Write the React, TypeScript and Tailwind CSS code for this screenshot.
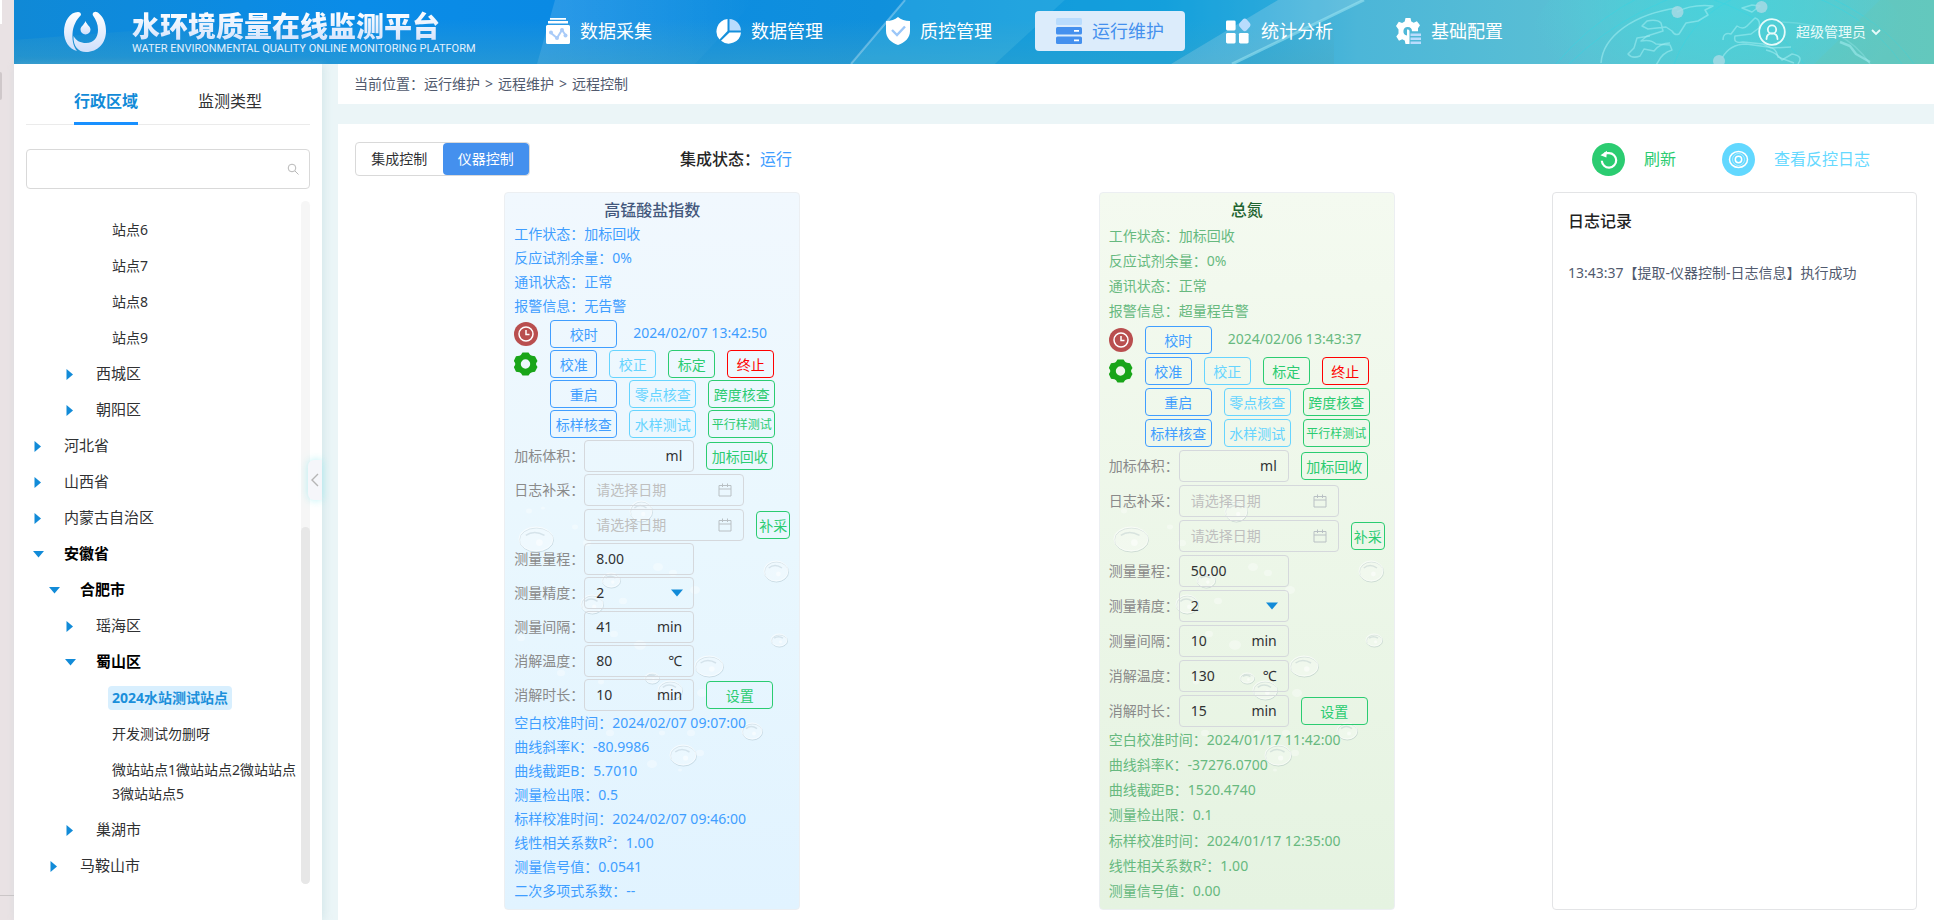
import { useState } from "react";
import type { ReactNode } from "react";

// ── Data ─────────────────────────────────────────────────────

interface Meter {
  id: string;
  name: string;
  theme: "blue" | "green";
  status: [string, string][];
  clock: string;
  range: string;
  precision: string;
  interval: string;
  temperature: string;
  duration: string;
  results: [string, string][];
}

const meters: Meter[] = [
  {
    id: "codmn",
    name: "高锰酸盐指数",
    theme: "blue",
    status: [
      ["工作状态", "加标回收"],
      ["反应试剂余量", "0%"],
      ["通讯状态", "正常"],
      ["报警信息", "无告警"],
    ],
    clock: "2024/02/07 13:42:50",
    range: "8.00",
    precision: "2",
    interval: "41",
    temperature: "80",
    duration: "10",
    results: [
      ["空白校准时间", "2024/02/07 09:07:00"],
      ["曲线斜率K", "-80.9986"],
      ["曲线截距B", "5.7010"],
      ["测量检出限", "0.5"],
      ["标样校准时间", "2024/02/07 09:46:00"],
      ["线性相关系数R²", "1.00"],
      ["测量信号值", "0.0541"],
      ["二次多项式系数", "--"],
    ],
  },
  {
    id: "tn",
    name: "总氮",
    theme: "green",
    status: [
      ["工作状态", "加标回收"],
      ["反应试剂余量", "0%"],
      ["通讯状态", "正常"],
      ["报警信息", "超量程告警"],
    ],
    clock: "2024/02/06 13:43:37",
    range: "50.00",
    precision: "2",
    interval: "10",
    temperature: "130",
    duration: "15",
    results: [
      ["空白校准时间", "2024/01/17 11:42:00"],
      ["曲线斜率K", "-37276.0700"],
      ["曲线截距B", "1520.4740"],
      ["测量检出限", "0.1"],
      ["标样校准时间", "2024/01/17 12:35:00"],
      ["线性相关系数R²", "1.00"],
      ["测量信号值", "0.00"],
    ],
  },
];

interface TreeNode {
  label: string;
  level: 1 | 2 | 3 | 4;
  state: "closed" | "open" | "leaf";
}

const tree: TreeNode[] = [
  { label: "站点6", level: 4, state: "leaf" },
  { label: "站点7", level: 4, state: "leaf" },
  { label: "站点8", level: 4, state: "leaf" },
  { label: "站点9", level: 4, state: "leaf" },
  { label: "西城区", level: 3, state: "closed" },
  { label: "朝阳区", level: 3, state: "closed" },
  { label: "河北省", level: 1, state: "closed" },
  { label: "山西省", level: 1, state: "closed" },
  { label: "内蒙古自治区", level: 1, state: "closed" },
  { label: "安徽省", level: 1, state: "open" },
  { label: "合肥市", level: 2, state: "open" },
  { label: "瑶海区", level: 3, state: "closed" },
  { label: "蜀山区", level: 3, state: "open" },
  { label: "2024水站测试站点", level: 4, state: "leaf" },
  { label: "开发测试勿删呀", level: 4, state: "leaf" },
  { label: "微站站点1微站站点2微站站点3微站站点5", level: 4, state: "leaf" },
  { label: "巢湖市", level: 3, state: "closed" },
  { label: "马鞍山市", level: 2, state: "closed" },
];

const indent = {
  1: "pl-[7px]",
  2: "pl-[23px]",
  3: "pl-[39px]",
  4: "pl-[86px]",
};

// ── Page ─────────────────────────────────────────────────────

export default function App() {
  return (
    <div className="flex min-h-screen bg-[#e9e2e4] pb-px font-['Noto_Sans','Noto_Sans_CJK_SC',sans-serif] text-sm text-[#303133]">
      <div className="flex w-3.5 shrink-0 flex-col">
        <div className="h-6 w-0.5 bg-white" />
        <div className="mt-12 h-7 w-0.5 rounded-r bg-[#cfc8ca]" />
        <div className="mt-auto mb-6 h-px bg-[#cbc6c7]" />
      </div>
      <div className="flex min-w-0 flex-1 flex-col bg-[#ebf5f7]">
        <Header />
        <div className="flex flex-1 gap-4">
          <Sidebar />
          <main className="flex min-w-0 flex-1 flex-col gap-5">
            <div className="flex h-10 items-center gap-[5px] bg-white px-4 text-[#515a6e]">
              <span>当前位置：运行维护</span>
              <span>&gt;</span>
              <span>远程维护</span>
              <span>&gt;</span>
              <span>远程控制</span>
            </div>
            <div className="flex flex-1 flex-col gap-4 bg-white px-[17px] pt-[18px] pb-2.5">
              <Toolbar />
              <div className="flex flex-1 gap-2">
                <div className="grid flex-1 grid-cols-2 justify-items-center">
                  {meters.map((m) => (
                    <MeterCard key={m.id} meter={m} />
                  ))}
                </div>
                <section className="w-[365px] shrink-0 rounded border border-[#e3e4e6] px-[15px] py-3.5">
                  <h2 className="text-base leading-7 font-medium text-[#1f1f1f]">日志记录</h2>
                  <p className="mt-[26px] leading-6 text-[#515a6e]">13:43:37【提取-仪器控制-日志信息】执行成功</p>
                </section>
              </div>
            </div>
          </main>
        </div>
      </div>
    </div>
  );
}

// ── Header ───────────────────────────────────────────────────

function Header() {
  return (
    <header className="relative flex h-16 items-center bg-gradient-to-r from-[#128bd8] via-[#1d9bda] via-55% to-[#63c9c0] text-white">
      <HeaderArt />
      <div className="relative flex w-[511px] items-center gap-[26px] pl-[50px]">
        <LogoDrop />
        <div className="pt-0.5">
          <h1 className="bg-gradient-to-b from-white to-[#d3e3fc] bg-clip-text text-[28px] leading-8 font-black text-transparent">
            水环境质量在线监测平台
          </h1>
          <p className="font-['Roboto',sans-serif] text-[11px] leading-3.5 whitespace-nowrap text-[#e3f0fd]">
            WATER ENVIRONMENTAL QUALITY ONLINE MONITORING PLATFORM
          </p>
        </div>
      </div>
      <nav className="relative flex gap-5 pb-0.5">
        <NavItem icon={<IconCollect />} label="数据采集" />
        <NavItem icon={<IconPie />} label="数据管理" />
        <NavItem icon={<IconShield />} label="质控管理" />
        <NavItem icon={<IconServer />} label="运行维护" active />
        <NavItem icon={<IconBlocks />} label="统计分析" />
        <NavItem icon={<IconGear />} label="基础配置" />
      </nav>
      <button className="relative mr-[53px] ml-auto flex items-center gap-2.5 text-[#e8fbfa]">
        <svg className="h-7 w-7" viewBox="0 0 28 28" fill="none" stroke="currentColor" strokeWidth={1.8}>
          <circle cx="14" cy="14" r="12.8" />
          <circle cx="14" cy="11.5" r="4.2" />
          <path d="M8.500 21c0-3.600 2-5.600 5.500-5.600s5.500 2 5.500 5.600" strokeLinecap="round" />
        </svg>
        <span className="flex items-center gap-[5px]">
          超级管理员
          <svg className="h-2.5 w-2.5" viewBox="0 0 10 10" fill="none" stroke="currentColor" strokeWidth={1.8}>
            <path d="M1 3l4 4 4-4" />
          </svg>
        </span>
      </button>
    </header>
  );
}

function NavItem({ icon, label, active }: { icon: ReactNode; label: string; active?: boolean }) {
  return (
    <a
      href="#"
      className={`flex h-10 w-[150px] items-center gap-2.5 rounded pl-[21px] text-lg whitespace-nowrap ${
        active ? "bg-[#dcecfb] text-[#4490ee]" : ""
      }`}
    >
      {icon}
      {label}
    </a>
  );
}

// ── Sidebar ──────────────────────────────────────────────────

function Sidebar() {
  return (
    <aside className="relative w-[308px] shrink-0 bg-white px-3 pb-9 shadow-[2px_0_8px_rgba(160,200,205,0.3)]">
      <div className="flex h-[61px] gap-[60px] border-b border-[#ebebeb] pl-12 text-base">
        <button className="-mb-px border-b-[3px] border-[#1890ff] pt-6 pb-2 font-bold text-[#128bd8]">
          行政区域
        </button>
        <button className="-mb-px border-b-[3px] border-transparent pt-6 pb-2 text-[#303133]">监测类型</button>
      </div>
      <label className="mt-6 flex h-10 items-center rounded border border-[#d9d9d9] px-2.5">
        <input type="search" aria-label="搜索" className="min-w-0 flex-1 outline-none" />
        <svg className="h-3 w-3 text-[#b8b8b8]" viewBox="0 0 12 12" fill="none" stroke="currentColor">
          <circle cx="5" cy="5" r="3.8" />
          <path d="M8 8l3.500 3.500" />
        </svg>
      </label>
      <div className="mt-3 flex">
        <ul className="min-w-0 flex-1 pt-[11px]">
          {tree.map((node) => (
            <TreeRow key={node.label} node={node} />
          ))}
        </ul>
        <div className="flex w-[9px] flex-col justify-end rounded-full bg-[#f6f6f6]">
          <div className="h-[357px] rounded-full bg-[#e7e7e7]" />
        </div>
      </div>
      <button
        aria-label="收起"
        className="absolute top-[396px] right-0 flex h-10 w-3.5 items-center justify-center rounded-l-md bg-[#f5f6fa] text-[#b5b5b5] shadow-[0_0_8px_rgba(130,235,240,0.55)]"
      >
        <svg className="h-3.5 w-2" viewBox="0 0 8 14" fill="none" stroke="currentColor" strokeWidth={1.4}>
          <path d="M7 1L1 7l6 6" />
        </svg>
      </button>
    </aside>
  );
}

function TreeRow({ node }: { node: TreeNode }) {
  if (node.state === "leaf") {
    const selected = node.label === "2024水站测试站点";
    return (
      <li className={`py-1.5 leading-6 ${indent[node.level]}`}>
        <button
          className={`text-left ${
            selected ? "-ml-1 rounded-sm bg-[#d8effe] px-1 font-bold text-[#1b8fdb]" : ""
          }`}
        >
          {node.label}
        </button>
      </li>
    );
  }
  const open = node.state === "open";
  return (
    <li className={indent[node.level]}>
      <button className={`flex h-9 items-center text-[15px] ${open ? "font-bold text-black" : ""}`}>
        <svg className="mr-5 h-[11px] w-[11px] text-[#128bd8]" viewBox="0 0 11 11" fill="currentColor">
          {open ? <path d="M0 2h11L5.500 8.500z" /> : <path d="M1.500 0v11l6.500-5.500z" />}
        </svg>
        {node.label}
      </button>
    </li>
  );
}

// ── Toolbar ──────────────────────────────────────────────────

function Toolbar() {
  return (
    <div className="flex h-[34px] items-center text-base">
      <div className="flex h-full w-[175px] rounded border border-[#d9d9d9] text-sm">
        <button className="flex-1 text-[#303133]">集成控制</button>
        <button className="flex-1 rounded bg-[#4490ee] text-white">仪器控制</button>
      </div>
      <div className="ml-[150px] font-medium text-[#262626]">
        集成状态：<span className="font-normal text-[#409eff]">运行</span>
      </div>
      <button className="ml-auto flex items-center gap-[19px] text-[#2bcc71]">
        <svg className="h-[33px] w-[33px]" viewBox="0 0 33 33" fill="none">
          <circle cx="16.500" cy="16.500" r="16.500" fill="#2bcc71" />
          <path d="M12.500 10.200H17a7.200 7.200 0 11-7.200 7.600" stroke="#fff" strokeWidth={2.2} />
          <path d="M8.500 12.300L15 7.800l-.6 6.600z" fill="#fff" />
        </svg>
        刷新
      </button>
      <button className="mr-[47px] ml-[46px] flex items-center gap-[19px] text-[#66d9ff]">
        <svg className="h-[33px] w-[33px]" viewBox="0 0 33 33" fill="none">
          <circle cx="16.500" cy="16.500" r="16.500" fill="#62d8ff" />
          <g stroke="#fff" strokeWidth={1.5}>
            <ellipse cx="16.500" cy="16.500" rx="9" ry="8" />
            <circle cx="16.500" cy="16.500" r="3.200" />
          </g>
          <circle cx="16.500" cy="16.500" r="6" stroke="#fff" strokeOpacity={0.45} />
        </svg>
        查看反控日志
      </button>
    </div>
  );
}

// ── Instrument card ──────────────────────────────────────────

const row = "flex grow basis-[30px] items-center gap-3";
const field = "flex grow basis-[34px] items-center";

function MeterCard({ meter }: { meter: Meter }) {
  const blue = meter.theme === "blue";
  return (
    <section
      className={`relative flex w-[296px] flex-col rounded border border-[#eceff2] bg-gradient-to-b px-[9px] pt-[3px] pb-[5px] whitespace-nowrap ${
        blue ? "from-[#f1f8fe] via-[#e9f7fe] to-[#e1f3ff] text-[#409eff]" : "from-[#f4faf0] to-[#e5f3e1] text-[#67b97f]"
      }`}
    >
      <Bubbles />
      <div className="relative flex flex-1 flex-col">
        <h2
          className={`flex grow basis-[27px] items-center justify-center text-base font-medium ${
            blue ? "text-[#44587c]" : "text-[#1e6430]"
          }`}
        >
          {meter.name}
        </h2>
        {meter.status.map(([k, v]) => (
          <InfoRow key={k} label={k} value={v} />
        ))}

        <div className={row}>
          <IconClock />
          <Btn tone="blue" wide>校时</Btn>
          <span className="ml-1 pb-0.5">{meter.clock}</span>
        </div>
        <div className={row}>
          <IconCog />
          <Btn tone="blue">校准</Btn>
          <Btn tone="cyan">校正</Btn>
          <Btn tone="green">标定</Btn>
          <Btn tone="red">终止</Btn>
        </div>
        <div className={`${row} pl-9`}>
          <Btn tone="blue" wide>重启</Btn>
          <Btn tone="cyan" wide>零点核查</Btn>
          <Btn tone="green" wide>跨度核查</Btn>
        </div>
        <div className={`${row} pl-9`}>
          <Btn tone="blue" wide>标样核查</Btn>
          <Btn tone="cyan" wide>水样测试</Btn>
          <Btn tone="green" wide><span className="text-xs">平行样测试</span></Btn>
        </div>

        <NumberField label="加标体积" unit="ml" value="">
          <Btn tone="green" wide>加标回收</Btn>
        </NumberField>
        <DateField label="日志补采" />
        <DateField>
          <Btn tone="green" narrow>补采</Btn>
        </DateField>
        <NumberField label="测量量程" value={meter.range} />
        <div className={field}>
          <label htmlFor={`${meter.id}-precision`} className="w-[70px] text-[#8a8a8a]">测量精度：</label>
          <div className="relative">
            <select
              id={`${meter.id}-precision`}
              defaultValue={meter.precision}
              className="h-8 w-[110px] appearance-none rounded border border-[#d5d8dc] px-[11px] text-[#303133] outline-none"
            >
              <option>1</option>
              <option>2</option>
              <option>3</option>
            </select>
            <svg className="pointer-events-none absolute top-3 right-[11px] h-2 w-3 text-[#128bd8]" viewBox="0 0 12 8" fill="currentColor">
              <path d="M0 .5h12L6 7.500z" />
            </svg>
          </div>
        </div>
        <NumberField label="测量间隔" unit="min" value={meter.interval} />
        <NumberField label="消解温度" unit="℃" value={meter.temperature} />
        <NumberField label="消解时长" unit="min" value={meter.duration}>
          <Btn tone="green" wide>设置</Btn>
        </NumberField>

        {meter.results.map(([k, v]) => (
          <InfoRow key={k} label={k} value={v} />
        ))}
      </div>
    </section>
  );
}

function InfoRow({ label, value }: { label: string; value: string }) {
  return (
    <div className="flex grow basis-6 items-center pb-0.5">
      {label}：{value}
    </div>
  );
}

function NumberField({ label, unit, value, children }: { label: string; unit?: string; value: string; children?: ReactNode }) {
  const [val, setVal] = useState(value);
  return (
    <div className={`${field} gap-3`}>
      <label className="flex items-center">
        <span className="w-[70px] text-[#8a8a8a]">{label}：</span>
        <span className="flex h-8 w-[110px] items-center rounded border border-[#d5d8dc] px-[11px] text-[#303133]">
          <input value={val} onChange={(e) => setVal(e.target.value)} className="w-0 min-w-0 flex-1 outline-none" />
          {unit}
        </span>
      </label>
      {children}
    </div>
  );
}

function DateField({ label, children }: { label?: string; children?: ReactNode }) {
  return (
    <div className={`${field} gap-3`}>
      <label className="flex items-center">
        <span className="w-[70px] text-[#8a8a8a]">{label && `${label}：`}</span>
        <span className="flex h-8 w-40 items-center rounded-sm border border-[#d5d8dc] px-[11px]">
          <input placeholder="请选择日期" className="w-0 min-w-0 flex-1 outline-none placeholder:text-[#bfbfbf]" />
          <svg className="h-3.5 w-3.5 text-[#b9c0c4]" viewBox="0 0 14 14" fill="none" stroke="currentColor">
            <path d="M1 2.500h12v10.500H1zM1 6h12M4.500 0.500v3.500M9.500 0.500v3.500" />
          </svg>
        </span>
      </label>
      {children}
    </div>
  );
}

const tones = {
  blue: "border-[#409eff] text-[#409eff]",
  cyan: "border-[#66d4ff] text-[#66d4ff]",
  green: "border-[#2bcc71] text-[#2bcc71]",
  red: "border-[#ff0000] text-[#ff0000]",
};

function Btn({ tone, wide, narrow, children }: { tone: keyof typeof tones; wide?: boolean; narrow?: boolean; children: ReactNode }) {
  return (
    <button
      className={`flex h-7 shrink-0 items-center justify-center rounded border pt-0.5 ${tones[tone]} ${
        wide ? "w-[67px]" : narrow ? "w-[34px]" : "w-[47px]"
      }`}
    >
      {children}
    </button>
  );
}

// ── Drawings ─────────────────────────────────────────────────

// cx, cy, rx, ry
const bubbles = [
  [31, 346, 17, 12], [136, 318, 11, 10], [271, 378, 12, 10], [106, 387, 9, 7], [87, 411, 11, 9],
  [274, 447, 8, 6], [204, 473, 14, 10], [147, 485, 7, 5], [165, 497, 12, 9], [247, 538, 10, 8],
  [178, 562, 13, 10],
];
const specks = [
  [59, 303, 4], [38, 315, 2], [24, 318, 3], [70, 334, 3], [82, 350, 4], [153, 374, 5], [168, 380, 4],
  [118, 408, 4], [109, 441, 4], [135, 452, 6], [190, 397, 5], [16, 445, 4], [56, 480, 4], [96, 489, 3],
  [197, 500, 5], [105, 540, 4], [186, 540, 4], [195, 560, 4], [147, 571, 5], [175, 577, 2], [157, 540, 3],
];

function Bubbles() {
  return (
    <svg className="pointer-events-none absolute top-0 left-0 h-[715px] w-full" viewBox="0 0 294 715" fill="none">
      {bubbles.map(([cx, cy, rx, ry]) => (
        <g key={`${cx}-${cy}`}>
          <ellipse cx={cx + 0.5} cy={cy + 1} rx={rx} ry={ry} stroke="#7d97a3" strokeOpacity={0.28} />
          <ellipse cx={cx} cy={cy} rx={rx} ry={ry} fill="#fff" fillOpacity={0.28} stroke="#fff" strokeOpacity={0.6} />
          <path
            d={`M${cx - rx * 0.6} ${cy - ry * 0.3}q${rx * 0.5} ${-ry * 0.5} ${rx * 1.1} 0`}
            stroke="#7d97a3"
            strokeOpacity={0.22}
            strokeWidth={1.5}
          />
          <circle cx={cx + rx * 0.2} cy={cy + ry * 0.3} r={rx * 0.2} fill="#fff" fillOpacity={0.5} />
        </g>
      ))}
      {specks.map(([cx, cy, r]) => (
        <ellipse key={`${cx}-${cy}`} cx={cx} cy={cy} rx={r} ry={r * 0.8} fill="#fff" fillOpacity={0.35} />
      ))}
    </svg>
  );
}

function HeaderArt() {
  return (
    <svg className="absolute inset-0 h-full w-full" viewBox="0 0 1920 64" preserveAspectRatio="none" fill="none">
      <defs>
        <linearGradient id="ha-base" x1="0" x2="1920" y1="0" y2="0" gradientUnits="userSpaceOnUse">
          <stop offset="0" stopColor="#1089d6" />
          <stop offset=".18" stopColor="#0a8ce8" />
          <stop offset=".28" stopColor="#0a8ae4" />
          <stop offset=".45" stopColor="#1090dc" />
          <stop offset=".6" stopColor="#17a0dc" />
          <stop offset=".7" stopColor="#4cb6d8" />
          <stop offset=".82" stopColor="#5bc0d4" />
          <stop offset="1" stopColor="#62c9c2" />
        </linearGradient>
        <linearGradient id="ha-shade" x1="0" x2="0" y1="0" y2="64" gradientUnits="userSpaceOnUse">
          <stop offset=".3" stopColor="#4aa8c0" stopOpacity="0" />
          <stop offset="1" stopColor="#4aa8c0" stopOpacity=".4" />
        </linearGradient>
        <linearGradient id="ha-streak" x1="0" x2="1" y1="0" y2="0">
          <stop offset="0" stopColor="#fff" stopOpacity=".14" />
          <stop offset="1" stopColor="#fff" stopOpacity="0" />
        </linearGradient>
        <radialGradient id="ha-globe" cx="0.5" cy="0.3" r="0.5">
          <stop offset="0" stopColor="#46d4de" stopOpacity=".85" />
          <stop offset=".5" stopColor="#4ad2da" stopOpacity=".6" />
          <stop offset="1" stopColor="#4fd0d8" stopOpacity="0" />
        </radialGradient>
      </defs>
      <rect width="1920" height="64" fill="url(#ha-base)" />
      <path d="M541 0h200l-60 64H523z" fill="url(#ha-streak)" />
      <path d="M520 0h800v64H0V40z" fill="url(#ha-shade)" />
      <path d="M891 0h160l-70 64H837z" fill="#4fc8e6" fillOpacity=".25" />
      <path d="M1051 0h213l-107 64H981z" fill="#10a0e0" fillOpacity=".28" />
      <path d="M891 0l-54 64" stroke="#fff" strokeOpacity=".3" strokeWidth="2" />
      <path d="M1264 0h86l-132 64h-61z" fill="#fff" fillOpacity=".14" />
      <path d="M1350 0l-132 64" stroke="#9fe6f2" strokeOpacity=".55" strokeWidth="3" />
      <ellipse cx="1705" cy="50" rx="190" ry="110" fill="url(#ha-globe)" />
      <g stroke="#35d6e4" strokeOpacity=".5">
        <path d="M1542 64Q1600-6 1700-30" />
        <path d="M1555 64Q1620 0 1720-20" />
        <path d="M1900 64Q1870 20 1800-10" />
        <path d="M1888 64Q1850 10 1780-10" />
        <path d="M1660 64Q1680 10 1740-10" />
        <path d="M1700 0Q1760 20 1790 64" />
      </g>
      <path d="M1866 0H1920V64H1800z" fill="#67c7b4" fillOpacity=".3" />
      <g stroke="#a5eef2" strokeOpacity=".55" strokeWidth="1.500" strokeLinejoin="round">
        <path d="M1587 63C1589 36 1620 14 1663 8" />
        <path d="M1663 12q14-8 36-6l-8 4 3 5-10 6-12 2-7 11q-4 2-7-3l-6-4-18 2-6-3 5-5q10-2 14 2l2 8-16 5-6 5q10-2 15 3l14 1 2 5q-10 3-14 12l-4 6" />
        <path d="M1636 36l-13 2-3 10-6 6q4 5 12 2l4-7 10 2q6-8 16-8" />
        <path d="M1709 40q0-8 8-6l6-8q6 4 10 0l8-8q6 2 4 10l-8 6-16 2q-2 8 8 6l20 2 8 4 20-1" />
        <path d="M1708 58q8-14 24-14l22 3q8 0 10 10l16 6" />
        <path d="M1728 8l10-3 8 1-8 6z" />
        <path d="M1752 50q10 2 16 10l10-6q12 2 6 10" />
        <path d="M1768 22Q1830 24 1856 64" strokeOpacity=".3" />
        <path d="M1826 42l10 4 6 8 14 8" strokeWidth="2.500" />
      </g>
      <g fill="#a6d9e4" fillOpacity=".85">
        <circle cx="1663.500" cy="12" r="6" />
        <circle cx="1747.500" cy="7" r="6" />
        <circle cx="1705" cy="61" r="6" />
      </g>
    </svg>
  );
}

const LogoDrop = () => (
  <svg className="h-[42px] w-[42px] shrink-0" viewBox="0 0 42 42">
    <defs>
      <linearGradient id="logo-fill" x1="0" x2="0" y1="0" y2="1">
        <stop offset="0" stopColor="#fff" />
        <stop offset="1" stopColor="#cfdffb" />
      </linearGradient>
    </defs>
    <path
      fill="url(#logo-fill)"
      d="M14 1C6 1 0 10 0 21c0 9 5 17 13 19-3-4-5-9-4.500-17C9 15 12 9 17 4c0-2-1-3-3-3z"
    />
    <path
      fill="url(#logo-fill)"
      d="M29.500 1.500c2-1.500 4-.5 5.500 1 5 4 7 11 7 17.500C42 32 34 41 22 41 14 41 9 35 9.500 25c3 5 7 7 12.500 7 8 0 12-6 12-13 0-6-2-10-5-14.500-.6-1-.3-2.300.5-3z"
    />
    <path fill="url(#logo-fill)" d="M21.500 10c1.500 4 5 5.500 5 8.500a5 5 0 01-10 0c0-3 3.500-4.500 5-8.500z" />
  </svg>
);

const IconCollect = () => (
  <svg className="h-[26px] w-6 shrink-0" viewBox="0 0 24 26" fill="none">
    <path fill="#fff" d="M4 0h16v1.800H4zM2 3h20v2.500H2zM1.500 7h21A1.500 1.500 0 0124 8.500v16a1.500 1.500 0 01-1.500 1.500h-21A1.500 1.500 0 010 24.500v-16A1.500 1.500 0 011.500 7z" />
    <path stroke="#a9cbf8" strokeWidth={2} d="M5 15l6 5 5-8 3.500 5" />
    <g fill="#a9cbf8">
      <circle cx="5" cy="14.500" r="2" />
      <circle cx="11" cy="20" r="2" />
      <circle cx="16" cy="12" r="2" />
      <circle cx="19.500" cy="17.500" r="2" />
    </g>
  </svg>
);

const IconPie = () => (
  <svg className="h-[26px] w-[25px] shrink-0" viewBox="0 0 25 26">
    <path fill="#fff" d="M11.500 1v12L3.500 21.500A12.500 12.500 0 0111.500 1z" />
    <path fill="#fff" d="M13.500 14.500H25A12.300 12.300 0 015 22.800z" />
    <path fill="#b9dcfd" d="M13.500 1A12 12 0 0125 12.500H13.500z" />
  </svg>
);

const IconShield = () => (
  <svg className="h-7 w-6 shrink-0" viewBox="0 0 24 28" fill="none">
    <path fill="#fff" d="M12 0c3 2.500 7 4 12 4v10c0 7-5 11.500-12 14C5 25.500 0 21 0 14V4c5 0 9-1.500 12-4z" />
    <path stroke="#9cc7f8" strokeWidth={2.4} d="M6 13l5 5 8-8.500" />
  </svg>
);

const IconServer = () => (
  <svg className="h-[26px] w-[26px] shrink-0" viewBox="0 0 26 26">
    <rect width="26" height="7" y="0" rx="1.500" fill="#b9dcfd" />
    <rect width="26" height="7.500" y="9" rx="1.500" fill="#4490ee" />
    <rect width="26" height="7.500" y="18.500" rx="1.500" fill="#4490ee" />
    <path fill="#fff" d="M18 12h5v1.800h-5zM18 21.500h5v1.800h-5z" />
  </svg>
);

const IconBlocks = () => (
  <svg className="h-[26px] w-[25px] shrink-0" viewBox="0 0 26 26" fill="#fff">
    <rect x="0" y="2" width="10" height="10.500" rx="1.500" />
    <rect x="0" y="15" width="10" height="11" rx="1.500" />
    <rect x="13.500" y="15" width="10" height="11" rx="1.500" />
    <path fill="#b9dcfd" d="M19.500 0c.8 0 1.300.3 1.800.8l3.500 4c.9 1.200.9 2.600 0 3.800l-3.500 4c-1 1-2.600 1-3.600 0l-3.500-4c-.9-1.200-.9-2.600 0-3.800l3.500-4c.5-.5 1-.8 1.800-.8z" />
  </svg>
);

const IconGear = () => (
  <svg className="h-[26px] w-[25px] shrink-0" viewBox="0 0 25 26" fill="none">
    <path
      fill="#fff"
      d="M9.500 0h5l.8 3.500 2.400 1.300 3.200-1.600 3.100 4-2 3v3h-6A4.300 4.300 0 1011 17.500V26H9.500l-.8-3.500-2.500-1.300L3 22.800.3 18.500 2.500 15.500v-4L0 8l2.800-4.300 3.300 1.200 2.600-1.400z"
    />
    <path fill="#fff" d="M11 11.500a2 2 0 012.500 2V26H11z" />
    <path fill="#b9dcfd" d="M14.500 15.500H25v2.500H14.500zM14.500 19.500H25V22H14.500zM14.500 23.500H25V26H14.500z" />
  </svg>
);

const IconClock = () => (
  <svg className="h-6 w-6 shrink-0" viewBox="0 0 24 24" fill="none">
    <circle cx="12" cy="12" r="12" fill="#b94f4f" />
    <circle cx="12" cy="12" r="7" stroke="#fff" strokeWidth={1.5} />
    <path stroke="#fff" strokeWidth={1.5} d="M12 8v4.500h3.500" />
  </svg>
);

const IconCog = () => (
  <svg className="h-6 w-6 shrink-0" viewBox="0 0 24 24">
    <path
      fill="#19a519"
      fillRule="evenodd"
      d="M8.500.5h6q1.500 3 3.500 3.200l3 .5 2.500 4.800q-1.500 2-1.500 3t1.500 3L21 19.800l-3 .5q-2 .2-3.500 3.200h-6Q7 20.500 5.500 20.300L2 19.800-.2 15Q1.300 13 1.300 12T-.2 9L2 4.200l3.500-.5Q7 3.500 8.500.5zM11.500 7.300a4.700 4.700 0 100 9.400 4.700 4.700 0 000-9.400z"
    />
  </svg>
);
